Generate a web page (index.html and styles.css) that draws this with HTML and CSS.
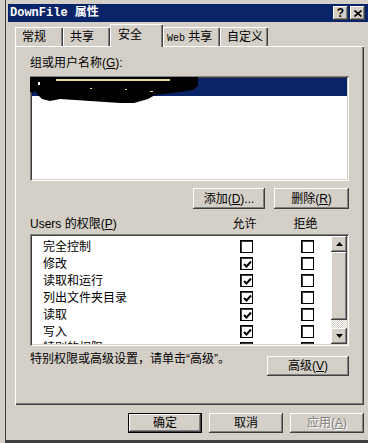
FILE: index.html
```html
<!DOCTYPE html>
<html lang="zh">
<head>
    <meta charset="UTF-8">
    <title>DownFile 属性</title>
    <link rel="stylesheet" href="styles.css">
</head>
<body>

<div class="window">
    <div class="titlebar">
        <span class="title">DownFile 属性</span>
        <div class="caption-btns">
            <span class="cbtn help">?</span>
            <span class="cbtn">
                <svg width="8" height="7" viewBox="0 0 8 7"><path d="M0.5 0.5 L7.5 6.5 M7.5 0.5 L0.5 6.5" stroke="#000" stroke-width="1.6"/></svg>
            </span>
        </div>
    </div>

    <div class="content">
        <!-- tabs -->
        <div class="tabs">
            <div class="tab w48">常规</div>
            <div class="tab w47">共享</div>
            <div class="tab active">安全</div>
            <div class="tab w57 tight"><span class="mono">Web</span> 共享</div>
            <div class="tab w48">自定义</div>
        </div>

        <div class="panel">
            <div class="label">组或用户名称(<u>G</u>):</div>
            <div class="listbox users">
                <div class="sel"></div>
                <svg class="scribble" width="172" height="30" viewBox="0 0 172 30">
                    <path d="M0 0 L168 0 L168 9 L163 13 L150 15 L125 18 L118 22 L104 26 L90 26 L75 25 L60 24 L45 23 L30 22 L20 24 L12 22 L8 18 L5 14 L3 16 L0 15 Z" fill="#000"/>
                    <path d="M26 2 L140 2 L140 4 L26 4 Z" fill="#e8d890"/>
                    <rect x="60" y="11" width="2" height="1" fill="#e8d890"/>
                    <rect x="120" y="14" width="3" height="1" fill="#e8d890"/>
                    <rect x="95" y="12" width="2" height="1" fill="#e8d890"/>
                    <rect x="8" y="5" width="2" height="3" fill="#fff"/>
                </svg>
            </div>

            <div class="btn-row">
                <button class="btn add">添加(<u>D</u>)...</button>
                <button class="btn del">删除(<u>R</u>)</button>
            </div>

            <div class="perm-head">
                <span class="head-name">Users 的权限(<u>P</u>)</span>
                <span class="col">允许</span>
                <span class="col">拒绝</span>
            </div>

            <div class="listbox perms">
                <div class="rows">
                    <div class="row"><span>完全控制</span><span class="cb"></span><span class="gap"></span><span class="cb"></span></div>
                    <div class="row"><span>修改</span><span class="cb on"><svg width="9" height="9" viewBox="0 0 9 9"><path d="M1 4 L3.5 6.5 L8 1.5" fill="none" stroke="#000" stroke-width="2"/></svg></span><span class="gap"></span><span class="cb"></span></div>
                    <div class="row"><span>读取和运行</span><span class="cb on"><svg width="9" height="9" viewBox="0 0 9 9"><path d="M1 4 L3.5 6.5 L8 1.5" fill="none" stroke="#000" stroke-width="2"/></svg></span><span class="gap"></span><span class="cb"></span></div>
                    <div class="row"><span>列出文件夹目录</span><span class="cb on"><svg width="9" height="9" viewBox="0 0 9 9"><path d="M1 4 L3.5 6.5 L8 1.5" fill="none" stroke="#000" stroke-width="2"/></svg></span><span class="gap"></span><span class="cb"></span></div>
                    <div class="row"><span>读取</span><span class="cb on"><svg width="9" height="9" viewBox="0 0 9 9"><path d="M1 4 L3.5 6.5 L8 1.5" fill="none" stroke="#000" stroke-width="2"/></svg></span><span class="gap"></span><span class="cb"></span></div>
                    <div class="row"><span>写入</span><span class="cb on"><svg width="9" height="9" viewBox="0 0 9 9"><path d="M1 4 L3.5 6.5 L8 1.5" fill="none" stroke="#000" stroke-width="2"/></svg></span><span class="gap"></span><span class="cb"></span></div>
                    <div class="row cut"><span>特别的权限</span><span class="cb"></span><span class="gap"></span><span class="cb"></span></div>
                </div>
                <div class="scrollbar">
                    <div class="sbtn">
                        <svg width="7" height="4" viewBox="0 0 7 4"><path d="M3.5 0 L7 4 L0 4 Z" fill="#000"/></svg>
                    </div>
                    <div class="thumb"></div>
                    <div class="track"></div>
                    <div class="sbtn">
                        <svg width="7" height="4" viewBox="0 0 7 4"><path d="M0 0 L7 0 L3.5 4 Z" fill="#000"/></svg>
                    </div>
                </div>
            </div>

            <div class="note-row">
                <span>特别权限或高级设置，请单击“高级”。</span>
                <button class="btn adv">高级(<u>V</u>)</button>
            </div>
        </div>

        <div class="footer">
            <button class="btn foot default">确定</button>
            <button class="btn foot">取消</button>
            <button class="btn foot disabled">应用(<u>A</u>)</button>
        </div>
    </div>
</div>

</body>
</html>
```

FILE: styles.css
```css
body {
    margin: 0;
    width: 368px;
    height: 443px;
    overflow: hidden;
    background-color: #d4d0c8;
    font-family: "Liberation Sans", "Noto Sans CJK SC", sans-serif;
    font-size: 12px;
    color: #000;
}

.window {
    margin-left: 5px;
    width: 370px;
    height: 443px;
    box-sizing: border-box;
    border-left: 1px solid #404040;
    border-bottom: 3px solid #404040;
    padding: 4px 0 0 2px;
}

/* title bar */
.titlebar {
    width: 360px;
    height: 18px;
    box-sizing: border-box;
    padding: 0 3px 0 2px;
    background-color: #0a246a;
    display: flex;
    align-items: center;
    justify-content: space-between;
}

.title {
    font-family: "Liberation Mono", "Noto Sans CJK SC", monospace;
    font-weight: bold;
    font-size: 12px;
    line-height: 14px;
    color: #fff;
}

.caption-btns {
    display: flex;
    gap: 2px;
}

.cbtn {
    width: 15px;
    height: 14px;
    box-sizing: border-box;
    background-color: #d4d0c8;
    box-shadow: inset -1px -1px #404040, inset 1px 1px #fff, inset -2px -2px #808080;
    display: flex;
    align-items: center;
    justify-content: center;
}

.cbtn.help {
    font-family: "Liberation Sans", sans-serif;
    font-weight: bold;
    font-size: 12px;
    line-height: 12px;
    padding-bottom: 1px;
}

.content {
    padding: 2px 0 0 7px;
}

/* tabs */
.tabs {
    display: flex;
    align-items: flex-end;
    height: 22px;
    position: relative;
    z-index: 1;
}

.tab {
    height: 19px;
    box-sizing: border-box;
    padding: 3px 0 0 7px;
    line-height: 14px;
    white-space: nowrap;
    overflow: hidden;
    background-color: #d4d0c8;
    box-shadow: inset 1px 1px #fff, inset -1px 0 #404040, inset -2px 0 #808080;
}

.tab.tight {
    padding-left: 4px;
}

.mono {
    font-family: "Liberation Mono", monospace;
    font-size: 10px;
}

.w48 { width: 48px; }
.w47 { width: 47px; }
.w57 { width: 57px; }

.tab.active {
    width: 53px;
    height: 23px;
    margin-bottom: -1px;
    padding: 4px 0 0 8px;
}

.panel {
    width: 349px;
    height: 359px;
    box-sizing: border-box;
    padding: 11px 15px 0 15px;
    box-shadow: inset 1px 1px #fff, inset -1px -1px #404040, inset -2px -2px #808080;
}

.label {
    height: 13px;
    line-height: 13px;
    margin-bottom: 6px;
}

.listbox {
    position: relative;
    box-sizing: border-box;
    padding: 2px;
    background-color: #fff;
    box-shadow: inset 1px 1px #808080, inset -1px -1px #fff, inset 2px 2px #404040, inset -2px -2px #d4d0c8;
}

.users {
    height: 105px;
}

.sel {
    height: 18px;
    background-color: #0a246a;
}

.scribble {
    position: absolute;
    left: 0;
    top: 1px;
}

/* buttons */
.btn {
    height: 21px;
    box-sizing: border-box;
    padding: 0;
    border: 0;
    background-color: #d4d0c8;
    font-family: inherit;
    font-size: 12px;
    line-height: 14px;
    color: #000;
    box-shadow: inset -1px -1px #404040, inset 1px 1px #fff, inset -2px -2px #808080;
}

.btn.default {
    box-shadow: inset 0 0 0 1px #000, inset -2px -2px #404040, inset 2px 2px #fff, inset -3px -3px #808080;
}

.btn.disabled {
    color: #808080;
    text-shadow: 1px 1px #fff;
}

.btn-row {
    display: flex;
    justify-content: flex-end;
    gap: 9px;
    margin-top: 7px;
}

.add { width: 72px; }
.del { width: 75px; }

.perm-head {
    display: grid;
    grid-template-columns: 198px 33px 28px 33px;
    height: 14px;
    line-height: 14px;
    margin-top: 8px;
    margin-bottom: 3px;
}

.perm-head .col:nth-of-type(2) {
    grid-column: 2;
    text-align: center;
}

.perm-head .col:nth-of-type(3) {
    grid-column: 4;
    text-align: center;
}

.perms {
    height: 112px;
    display: flex;
}

.rows {
    flex: 1;
    overflow: hidden;
    padding-top: 2px;
}

.row {
    display: grid;
    grid-template-columns: 208px 13px 48px 13px;
    align-items: center;
    height: 17px;
}

.row span:first-child {
    padding-left: 11px;
    line-height: 14px;
}

/* last row only shows its top edge */
.row.cut {
    align-items: start;
    height: 5px;
    overflow: hidden;
}

.row.cut span:first-child {
    height: 5px;
    overflow: hidden;
    line-height: 16px;
    margin-top: 0;
}

.row.cut .cb {
    margin-top: 2px;
}

.cb {
    width: 13px;
    height: 13px;
    box-sizing: border-box;
    background-color: #fff;
    border: 1px solid #000;
    box-shadow: inset 1px 1px #404040;
    display: flex;
    align-items: center;
    justify-content: center;
}

.cb svg {
    margin: 1px 0 0 1px;
}

/* scrollbar */
.scrollbar {
    width: 16px;
    display: flex;
    flex-direction: column;
}

.sbtn {
    height: 16px;
    box-sizing: border-box;
    background-color: #d4d0c8;
    box-shadow: inset -1px -1px #404040, inset 1px 1px #fff, inset -2px -2px #808080;
    display: flex;
    align-items: center;
    justify-content: center;
}

.thumb {
    height: 68px;
    box-sizing: border-box;
    background-color: #d4d0c8;
    box-shadow: inset -1px -1px #404040, inset 1px 1px #fff, inset -2px -2px #808080;
}

.track {
    flex: 1;
    background-color: #e8e6e2;
    background-image: repeating-conic-gradient(#fff 0 25%, #d4d0c8 0 50%);
    background-size: 2px 2px;
}

.note-row {
    display: flex;
    justify-content: space-between;
    align-items: flex-start;
    margin-top: 6px;
    line-height: 14px;
}

.adv {
    width: 82px;
    height: 20px;
    margin-top: 4px;
}

.footer {
    width: 349px;
    display: flex;
    justify-content: flex-end;
    gap: 7px;
    margin-top: 8px;
}

.foot {
    width: 74px;
    height: 20px;
}
```
